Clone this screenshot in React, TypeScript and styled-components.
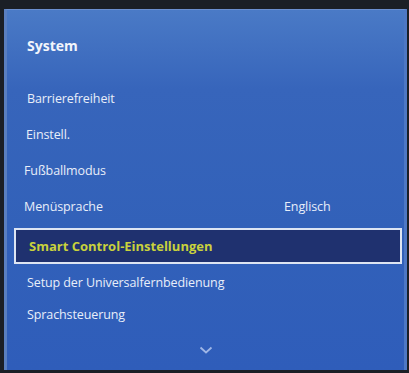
import React from 'react';
import styled, { createGlobalStyle } from 'styled-components';

const GlobalStyle = createGlobalStyle`
    html, body {
        margin: 0;
        padding: 0;
        background: #1b1f26;
    }
`;

const Screen = styled.div`
    width: 409px;
    height: 373px;
    box-sizing: border-box;
    padding: 9px 2px 3px 4px;
    background: #1b1f26;
    font-family: "Open Sans", "Noto Sans", sans-serif;
`;

const Panel = styled.div`
    height: 100%;
    box-sizing: border-box;
    display: flex;
    flex-direction: column;
    background: linear-gradient(180deg, #4a7ac6 0%, #3765bb 22%, #3261b9 60%, #2f5dba 100%);
    border-left: 3px solid #5a7fc0;
    border-right: 3px solid #4e78c4;
    border-top: 1px solid #6b8fd0;
    padding: 0 2px 0 6px;
`;

const Title = styled.div`
    color: #f2f5fb;
    font-size: 14px;
    font-weight: 700;
    padding: 26px 0 0 14px;
    height: 48px;
    line-height: 20px;
    box-sizing: border-box;
    margin-bottom: 22px;
`;

const Row = styled.div<{ $indent: number; $height?: number }>`
    display: flex;
    align-items: center;
    height: ${p => p.$height ?? 36}px;
    padding-left: ${p => p.$indent}px;
    color: #e8eef9;
    font-size: 12.5px;
    letter-spacing: -0.1px;
`;

const Value = styled.span`
    margin-left: auto;
    width: 118px;
`;

const Selected = styled.div`
    display: flex;
    align-items: center;
    height: 36px;
    box-sizing: border-box;
    margin: 4px 0 0 1px;
    padding-left: 13px;
    border: 2px solid #dde5f3;
    background: #1f316f;
    color: #c9d23c;
    font-size: 13px;
    font-weight: 700;
`;

const Arrow = styled.div`
    display: flex;
    justify-content: center;
    margin-top: 18px;
    padding-right: 4px;
`;

const items = [
    { label: 'Barrierefreiheit', indent: 14 },
    { label: 'Einstell.', indent: 13 },
    { label: 'Fußballmodus', indent: 11 },
    { label: 'Menüsprache', indent: 11, value: 'Englisch' },
];

const App = () => (
    <Screen>
        <GlobalStyle />
        <Panel>
            <Title>System</Title>
            {items.map(item => (
                <Row key={item.label} $indent={item.indent}>
                    {item.label}
                    {item.value && <Value>{item.value}</Value>}
                </Row>
            ))}
            <Selected>Smart Control-Einstellungen</Selected>
            <Row $indent={14}>Setup der Universalfernbedienung</Row>
            <Row $indent={14} $height={28}>Sprachsteuerung</Row>
            <Arrow>
                <svg width="14" height="8" viewBox="0 0 14 8">
                    <path d="M1.5 1.5 L7 6.5 L12.5 1.5" fill="none" stroke="#9fb6e6" strokeWidth="1.8" />
                </svg>
            </Arrow>
        </Panel>
    </Screen>
);

export default App;
